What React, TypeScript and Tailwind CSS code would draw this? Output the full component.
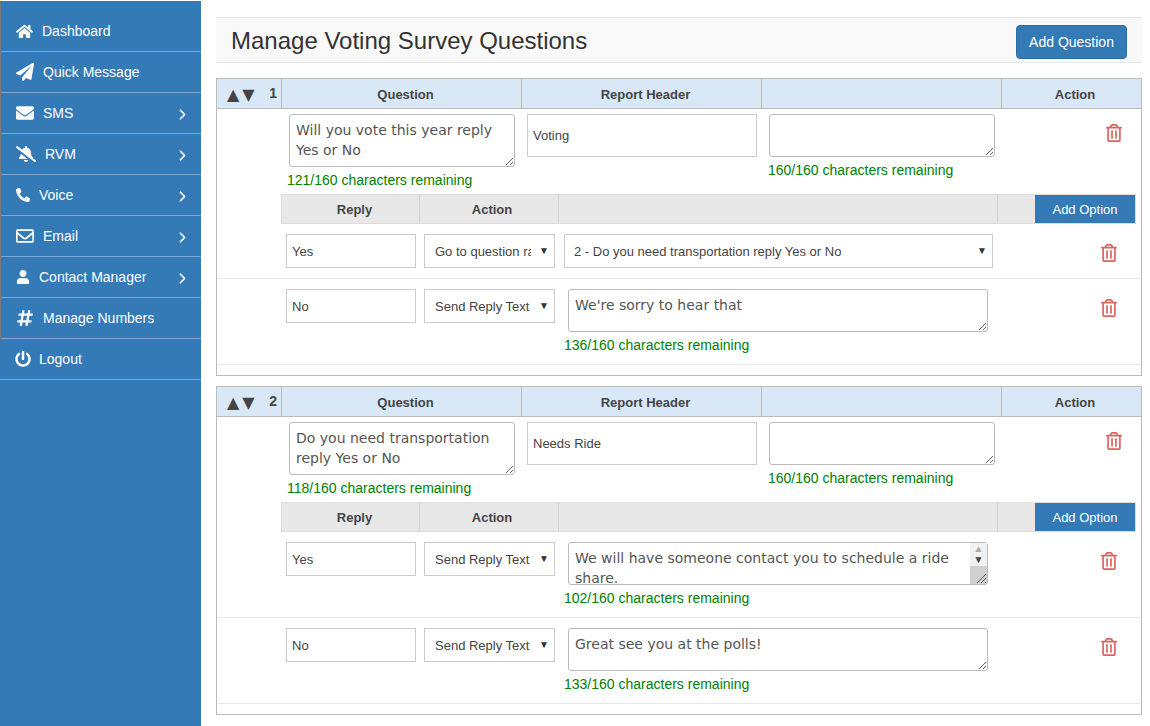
import React from "react";
import { ChevronRight } from "lucide-react";
import {
  FaHome, FaPaperPlane, FaEnvelope, FaBellSlash, FaPhoneAlt, FaRegEnvelope, FaUser, FaHashtag, FaPowerOff, FaRegTrashAlt,
} from "react-icons/fa";

const nav = [
  { label: "Dashboard", icon: <FaHome size={17} />, box: "w-[26px]" },
  { label: "Quick Message", icon: <FaPaperPlane size={18} />, box: "w-[27px]" },
  { label: "SMS", icon: <FaEnvelope size={18} />, box: "w-[27px]", more: true },
  { label: "RVM", icon: <FaBellSlash size={20} />, box: "w-[29px]", more: true },
  { label: "Voice", icon: <FaPhoneAlt size={14} />, box: "w-[23px]", more: true },
  { label: "Email", icon: <FaRegEnvelope size={18} />, box: "w-[27px]", more: true },
  { label: "Contact Manager", icon: <FaUser size={14} />, box: "w-[23px]", more: true },
  { label: "Manage Numbers", icon: <FaHashtag size={18} />, box: "w-[27px]" },
];

function NavItem({ label, icon, box, more }: { label: string; icon: React.ReactNode; box: string; more?: boolean }) {
  return (
    <div className="flex h-[41px] items-center border-b border-[#7ea6cf] pl-[15px] pr-[10px] text-[14px] text-white">
      <span className={`${box} flex shrink-0 items-center`}>{icon}</span>
      <span>{label}</span>
      {more && <ChevronRight className="ml-auto mt-[2px]" size={17} strokeWidth={2.4} />}
    </div>
  );
}

const Count = ({ n, className }: { n: number; className: string }) => (
  <div className={`h-[20px] text-[14px] leading-[20px] text-[#008000] ${className}`}>{n}/160 characters remaining</div>
);

const Trash = ({ className }: { className: string }) => (
  <FaRegTrashAlt size={18} className={`shrink-0 text-[#dc6460] ${className}`} />
);

const areaCls =
  "block rounded-[3px] border border-[#bbb] bg-white px-[6px] py-[5px] text-[14px] leading-[20px] text-[#555] outline-none overflow-hidden [font-family:'DejaVu_Sans',sans-serif]";
const inputCls =
  "block h-[34px] border border-[#ccc] bg-white px-[5px] text-[13px] text-[#444] outline-none";

function Select({ value, className, pad }: { value: string; className: string; pad: string }) {
  return (
    <div className={`relative shrink-0 ${className}`}>
      <select
        defaultValue={value}
        className={`block h-[34px] w-full appearance-none rounded-none border border-[#ccc] bg-white pr-[23px] pt-[1px] text-[13px] text-[#444] outline-none ${pad}`}
      >
        <option>{value}</option>
      </select>
      <span className="pointer-events-none absolute right-[6px] top-[10px] text-[10px] leading-[14px] text-[#333]">▼</span>
    </div>
  );
}

type Row =
  | { reply: string; action: "go"; target: string }
  | { reply: string; action: "send"; text: string; n: number; scroll?: boolean };

function ReplyRow({ row }: { row: Row }) {
  if (row.action === "go") {
    return (
      <div className="flex items-start border-b border-[#e8e8e8] pb-[10px] pl-[69px] pt-[10px]">
        <input defaultValue={row.reply} className={`${inputCls} w-[130px]`} />
        <Select value="Go to question randomly" className="ml-[8px] w-[131px]" pad="pl-[10px]" />
        <Select value="2 - Do you need transportation reply Yes or No" className="ml-[9px] w-[429px]" pad="pl-[9px]" />
        <Trash className="ml-[107px] mt-[10px]" />
      </div>
    );
  }
  return (
    <div className="flex items-start border-b border-[#e8e8e8] pb-[9px] pl-[69px] pt-[10px] last:mb-[10px]">
      <input defaultValue={row.reply} className={`${inputCls} w-[130px]`} />
      <Select value="Send Reply Text" className="ml-[8px] w-[131px]" pad="pl-[10px]" />
      <div className="ml-[9px] w-[429px] shrink-0">
        <div className="relative ml-[4px] w-[420px]">
          <textarea defaultValue={row.text} className={`${areaCls} h-[43px] w-full`} />
          {row.scroll && (
            <div className="absolute right-[1px] top-[1px] flex h-[41px] w-[17px] flex-col items-center bg-[#f1f1f1] text-[10px] leading-[11px]">
              <span className="text-[#aaa]">▲</span>
              <span className="text-[#444]">▼</span>
              <span className="relative mt-auto h-[18px] w-full bg-[#d0d0d0]">
                <svg className="absolute bottom-0 right-0" width="12" height="12" viewBox="0 0 12 12">
                  <path d="M11 2L2 11M11 6L6 11M11 10L10 11" stroke="#555" strokeWidth="1" fill="none" />
                </svg>
              </span>
            </div>
          )}
        </div>
        <Count n={row.n} className="mt-[3px]" />
      </div>
      <Trash className="ml-[107px] mt-[10px]" />
    </div>
  );
}

function Card({ num, q, header, n, rows, qClass }: { num: number; q: string; header: string; n: number; rows: Row[]; qClass: string }) {
  const th = "flex items-center justify-center border-r border-[#bbb] pl-[8px] pt-[2px] text-[13px] font-bold text-[#444]";
  return (
    <div className={`border border-[#bbb] ${qClass}`}>
      <div className="grid h-[30px] grid-cols-[65px_240px_240px_240px_139px] border-b border-[#bbb] bg-[#d9e8f7]">
        <div className="flex items-center border-r border-[#bbb] pl-[10px] text-[#444]">
          <span className="mt-[2px] text-[16px] leading-none [font-family:'DejaVu_Sans',sans-serif]">▲</span>
          <span className="ml-[3px] mt-[2px] text-[16px] leading-none [font-family:'DejaVu_Sans',sans-serif]">▼</span>
          <span className="ml-auto pr-[4px] text-[14px] font-bold">{num}</span>
        </div>
        <div className={th}>Question</div>
        <div className={th}>Report Header</div>
        <div className={th} />
        <div className="flex items-center justify-center pl-[7px] pt-[2px] text-[13px] font-bold text-[#444]">Action</div>
      </div>

      <div className="flex h-[85px] items-start pl-[72px] pt-[5px]">
        <div className="w-[226px] shrink-0">
          <textarea defaultValue={q} className={`${areaCls} h-[53px] w-full`} />
          <Count n={n} className="-ml-[2px] mt-[3px]" />
        </div>
        <input defaultValue={header} className={`${inputCls} ml-[12px] h-[43px] w-[230px]`} />
        <div className="ml-[12px] w-[226px] shrink-0">
          <textarea className={`${areaCls} h-[43px] w-full`} />
          <Count n={160} className="-ml-[1px] mt-[3px]" />
        </div>
        <Trash className="ml-[110px] mt-[10px]" />
      </div>

      <div className="ml-[64px] grid h-[30px] w-[855px] grid-cols-[138px_139px_439px_37px_100px] border border-[#ddd] bg-[#e8e8e8] text-[13px] font-bold text-[#444]">
        <div className="flex items-center justify-center border-r border-[#d4d4d4] pl-[8px] pt-[2px]">Reply</div>
        <div className="flex items-center justify-center border-r border-[#d4d4d4] pl-[6px] pt-[2px]">Action</div>
        <div className="border-r border-[#d4d4d4]" />
        <div />
        <div className="flex items-center justify-center bg-[#337ab7] pt-[1px] font-normal text-white">Add Option</div>
      </div>

      {rows.map((r, i) => (
        <ReplyRow key={i} row={r} />
      ))}
    </div>
  );
}

export default function App() {
  return (
    <div className="flex h-[726px] overflow-hidden bg-white [font-family:'Liberation_Sans',sans-serif]">
      <aside className="mt-[1px] w-[201px] shrink-0 bg-[#337ab7]">
        <div className="border-l border-[#777] pt-[10px]">
          {nav.map((n) => (
            <NavItem key={n.label} {...n} />
          ))}
        </div>
        <div className="flex h-[41px] items-center border-b border-[#7ea6cf] pl-[15px] text-[14px] text-white">
          <span className="flex w-[24px] shrink-0 items-center">
            <FaPowerOff size={16} />
          </span>
          <span>Logout</span>
        </div>
      </aside>

      <main className="ml-[15px] w-[926px] shrink-0 pt-[17px]">
        <div className="mb-[15px] flex h-[46px] items-center justify-between border-y border-[#e7e7e7] bg-[#f9f9f9] px-[15px]">
          <h1 className="mt-[2px] text-[24px] leading-none text-[#333]">Manage Voting Survey Questions</h1>
          <button className="mt-[4px] h-[34px] w-[111px] rounded-[4px] border border-[#2e6da4] bg-[#337ab7] text-[14px] text-white">
            Add Question
          </button>
        </div>

        <Card
          num={1}
          q="Will you vote this year reply Yes or No"
          header="Voting"
          n={121}
          qClass="mb-[10px]"
          rows={[
            { reply: "Yes", action: "go", target: "2" },
            { reply: "No", action: "send", text: "We're sorry to hear that", n: 136 },
          ]}
        />
        <Card
          num={2}
          q="Do you need transportation reply Yes or No"
          header="Needs Ride"
          n={118}
          qClass=""
          rows={[
            { reply: "Yes", action: "send", text: "We will have someone contact you to schedule a ride share.", n: 102, scroll: true },
            { reply: "No", action: "send", text: "Great see you at the polls!", n: 133 },
          ]}
        />
      </main>
    </div>
  );
}
